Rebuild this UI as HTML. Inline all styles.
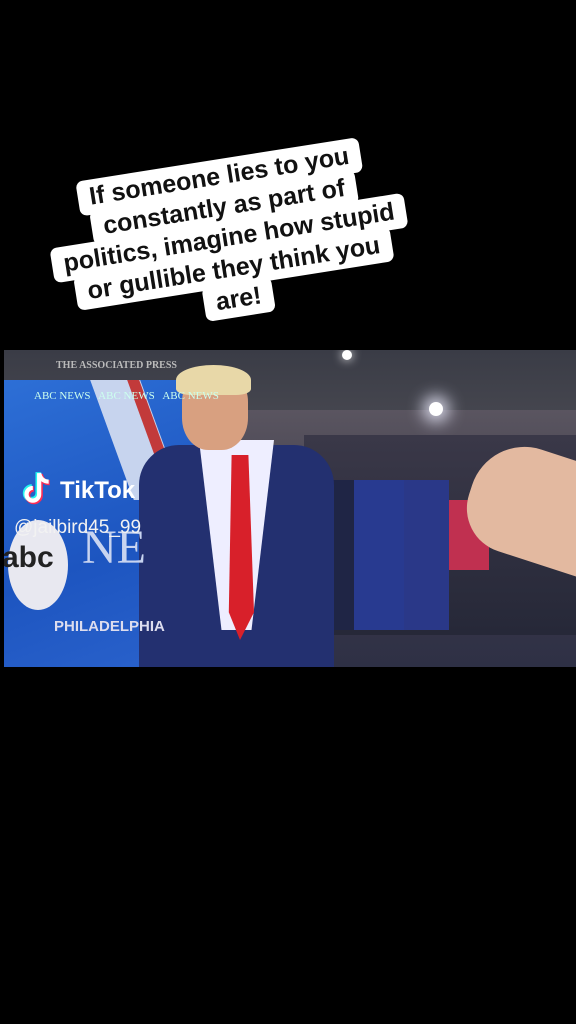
<!DOCTYPE html>
<html><head><meta charset="utf-8"><style>
body{margin:0;width:576px;height:1024px;background:#000;overflow:hidden;position:relative;font-family:"Liberation Sans",sans-serif}
.cap{position:absolute;left:229px;top:238px;width:480px;transform:translate(-50%,-50%) rotate(-9deg);text-align:center;font-weight:bold;font-size:25px;line-height:31px;color:#111}
.cap span{display:inline-block;background:#fff;padding:2px 12px;border-radius:7px;margin:-2px 0}
.v{position:absolute;left:4px;top:350px;width:572px;height:317px;overflow:hidden;background:#2a2d3a}
.a{position:absolute}
</style></head><body>
<div class="cap"><span>If someone lies to you</span><br><span>constantly as part of</span><br><span>politics, imagine how stupid</span><br><span>or gullible they think you</span><br><span>are!</span></div>
<div class="v">
 <div class="a" style="left:0;top:0;width:572px;height:90px;background:linear-gradient(#3a3c46,#4a4a52)"></div>
 <div class="a" style="left:180px;top:60px;width:392px;height:257px;background:linear-gradient(#5a5560,#3a3848 60%,#2e3045)"></div>
 <div class="a" style="left:338px;top:0;width:10px;height:10px;border-radius:50%;background:#fff;box-shadow:0 0 10px #fff"></div>
 <div class="a" style="left:425px;top:52px;width:14px;height:14px;border-radius:50%;background:#fff;box-shadow:0 0 16px 6px #dde"></div>
 <div class="a" style="left:0;top:30px;width:190px;height:287px;background:linear-gradient(160deg,#2d6fd6,#1d55c0 60%,#2a62cc)"></div>
 <div class="a" style="left:108px;top:30px;width:50px;height:120px;background:#c7d4ee;transform:skewX(20deg)"></div>
 <div class="a" style="left:145px;top:30px;width:12px;height:120px;background:#c23a3a;transform:skewX(20deg)"></div>
 <div class="a" style="left:300px;top:85px;width:272px;height:200px;background:linear-gradient(#3a3848,#262838)"></div>
 <div class="a" style="left:300px;top:130px;width:50px;height:150px;background:#1f2545"></div>
 <div class="a" style="left:350px;top:130px;width:50px;height:150px;background:#283a90"></div>
 <div class="a" style="left:400px;top:130px;width:45px;height:150px;background:#2a3888"></div>
 <div class="a" style="left:445px;top:150px;width:40px;height:70px;background:#c03050"></div>
 <div class="a" style="left:135px;top:95px;width:195px;height:222px;background:#233070;border-radius:40px 40px 0 0"></div>
 <div class="a" style="left:195px;top:90px;width:75px;height:190px;background:#eef;clip-path:polygon(0 0,100% 0,70% 100%,30% 100%)"></div>
 <div class="a" style="left:222px;top:105px;width:28px;height:185px;background:#d8202a;clip-path:polygon(20% 0,80% 0,100% 85%,50% 100%,10% 85%)"></div>
 <div class="a" style="left:178px;top:20px;width:66px;height:80px;background:#d8a080;border-radius:40%"></div>
 <div class="a" style="left:172px;top:15px;width:75px;height:30px;background:#e8d8a8;border-radius:50% 50% 20% 20%"></div>
 <div class="a" style="left:465px;top:100px;width:130px;height:110px;background:#e3b9a0;border-radius:55px 0 0 45px;transform:rotate(18deg)"></div>
 <div class="a" style="left:4px;top:170px;width:60px;height:90px;border-radius:50%;background:#e8e8f0"></div>
 <div class="a" style="left:-2px;top:191px;font:bold 30px 'Liberation Sans';color:#222">abc</div>
 <div class="a" style="left:78px;top:170px;font:48px 'Liberation Serif';color:#c8d4f0">NE</div>
 <div class="a" style="left:50px;top:268px;font:bold 15px 'Liberation Sans';color:#dde">PHILADELPHIA</div>
 <div class="a" style="left:52px;top:10px;font:bold 10px 'Liberation Serif';color:#bbb">THE ASSOCIATED PRESS</div>
 <div class="a" style="left:30px;top:40px;font:11px 'Liberation Serif';color:#cfe">ABC NEWS &nbsp; ABC NEWS &nbsp; ABC NEWS</div>
</div>
<svg class="a" style="left:18px;top:470px" width="36" height="38" viewBox="0 0 34 36"><path d="M20 3v20a6 6 0 1 1-6-6" fill="none" stroke="#25f4ee" stroke-width="5" transform="translate(-1,-1)"/><path d="M20 3v20a6 6 0 1 1-6-6M20 3c1 5 4 8 9 8" fill="none" stroke="#fe2c55" stroke-width="5" transform="translate(1,1)"/><path d="M20 3v20a6 6 0 1 1-6-6M20 3c1 5 4 8 9 8" fill="none" stroke="#fff" stroke-width="4"/></svg>
<div class="a" style="left:60px;top:477px;font:bold 24px 'Liberation Sans';color:#fff">TikTok</div>
<div class="a" style="left:14px;top:517px;font:19px 'Liberation Sans';color:#f2f2f2">@jailbird45_99</div>
</body></html>
